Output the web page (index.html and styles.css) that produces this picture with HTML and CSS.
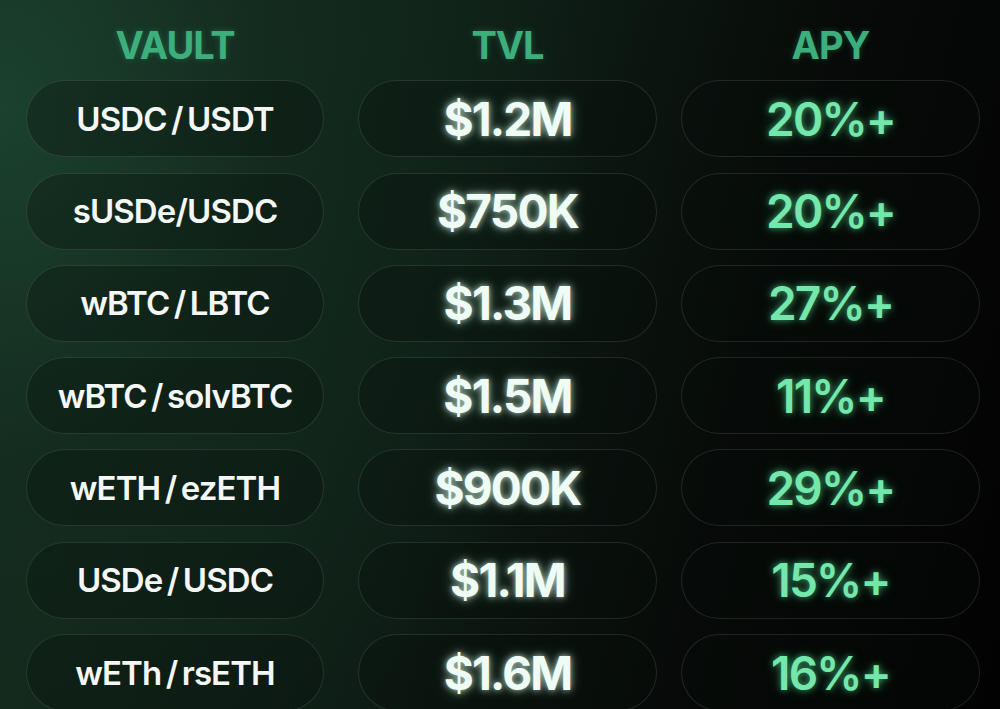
FILE: index.html
```html
<!DOCTYPE html>
<html>
<head>
<meta charset="utf-8">
<link rel="stylesheet" href="styles.css">
</head>
<body>
<div class="table">
  <div class="head c1">VAULT</div>
  <div class="head c2">TVL</div>
  <div class="head c3">APY</div>

  <div class="pill c1 vault">USDC / USDT</div>
  <div class="pill c2 tvl">$1.2M</div>
  <div class="pill c3 apy">20%+</div>

  <div class="pill c1 vault">sUSDe/USDC</div>
  <div class="pill c2 tvl">$750K</div>
  <div class="pill c3 apy">20%+</div>

  <div class="pill c1 vault">wBTC / LBTC</div>
  <div class="pill c2 tvl">$1.3M</div>
  <div class="pill c3 apy">27%+</div>

  <div class="pill c1 vault">wBTC / solvBTC</div>
  <div class="pill c2 tvl">$1.5M</div>
  <div class="pill c3 apy">11%+</div>

  <div class="pill c1 vault">wETH / ezETH</div>
  <div class="pill c2 tvl">$900K</div>
  <div class="pill c3 apy">29%+</div>

  <div class="pill c1 vault">USDe / USDC</div>
  <div class="pill c2 tvl">$1.1M</div>
  <div class="pill c3 apy">15%+</div>

  <div class="pill c1 vault">wETh / rsETH</div>
  <div class="pill c2 tvl">$1.6M</div>
  <div class="pill c3 apy">16%+</div>
</div>
</body>
</html>
```
FILE: styles.css
```css
html, body {
  margin: 0;
  padding: 0;
  width: 1000px;
  height: 709px;
  overflow: hidden;
}
body {
  background:
    radial-gradient(ellipse 700px 900px at 0% 15%, rgba(28, 66, 47, 0.95) 0%, rgba(20, 44, 32, 0.7) 40%, rgba(10, 20, 15, 0) 85%),
    linear-gradient(105deg, #15301f 0%, #0e1d15 45%, #070a08 72%, #020202 100%);
  font-family: "Inter", sans-serif;
}
.table {
  display: grid;
  grid-template-columns: 298px 333px 323px;
  grid-template-rows: 65px;
  grid-auto-rows: 77px;
  row-gap: 15.3px;
  padding-left: 26px;
}
.c2 { margin-left: 34px; }
.c3 { margin-left: 24px; }
.head {
  padding-top: 24px;
  line-height: 42px;
  text-align: center;
  font-weight: 700;
  font-size: 38px;
  letter-spacing: -1px;
  color: #3daf7c;
  text-shadow: 0 0 6px rgba(61, 175, 124, 0.35);
}
.pill {
  box-sizing: border-box;
  border: 1.5px solid rgba(255, 255, 255, 0.11);
  border-radius: 40px;
  background: rgba(8, 14, 11, 0.3);
  display: flex;
  align-items: center;
  justify-content: center;
}
.vault {
  color: #f4f7f5;
  font-weight: 600;
  font-size: 33px;
  letter-spacing: -0.9px;
  word-spacing: -3px;
}
.tvl {
  color: #eefcf5;
  font-weight: 700;
  font-size: 46px;
  letter-spacing: -1.8px;
  text-shadow: 0 0 6px rgba(220, 255, 235, 0.75), 0 0 14px rgba(200, 255, 225, 0.35);
}
.apy {
  color: #74e7ac;
  font-weight: 600;
  font-size: 46px;
  letter-spacing: -1.8px;
  text-shadow: 0 0 6px rgba(90, 230, 150, 0.6), 0 0 14px rgba(80, 220, 140, 0.3);
}
```
